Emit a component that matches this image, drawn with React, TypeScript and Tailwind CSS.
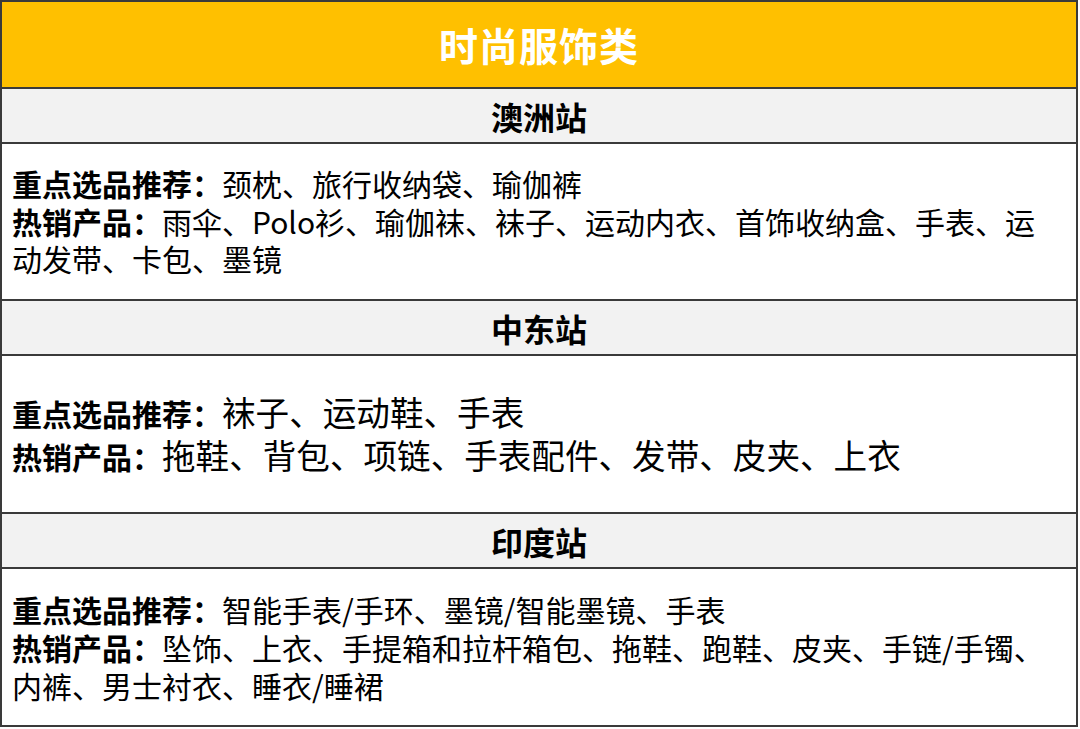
import React from "react";

const font = { fontFamily: '"Noto Sans CJK SC", "Noto Sans", sans-serif' };

function SubHeader({ title }: { title: string }) {
  return (
    <div className="h-[55px] border-b-2 border-[#3a3a3a] bg-[#f2f2f2] flex items-center justify-center">
      <span className="text-[32px] font-bold text-black leading-none">{title}</span>
    </div>
  );
}

function Line({ label, children, cls }: { label?: string; children: React.ReactNode; cls: string }) {
  return (
    <div className={"whitespace-nowrap " + cls}>
      {label && <span className="text-[30px] font-bold">{label}</span>}
      <span>{children}</span>
    </div>
  );
}

export default function App() {
  const r1 = "text-[30px] leading-[37.5px]";
  const r2 = "text-[33.6px] leading-[42px]";
  const r3 = "text-[30px] leading-[38px]";
  return (
    <div className="w-[1080px] h-[729px] bg-white" style={font}>
      <div className="w-[1078px] h-[727px] border-2 border-[#3a3a3a] flex flex-col text-black">
        <div className="h-[87px] border-b-2 border-[#3a3a3a] bg-[#ffc000] flex items-center justify-center">
          <span className="text-[39px] font-bold text-white leading-none tracking-[1px]">时尚服饰类</span>
        </div>

        <SubHeader title="澳洲站" />
        <div className="h-[157px] border-b-2 border-[#3a3a3a] flex flex-col justify-center pl-[10px]">
          <Line cls={r1} label="重点选品推荐：">颈枕、旅行收纳袋、瑜伽裤</Line>
          <Line cls={r1} label="热销产品：">雨伞、Polo衫、瑜伽袜、袜子、运动内衣、首饰收纳盒、手表、运</Line>
          <Line cls={r1}>动发带、卡包、墨镜</Line>
        </div>

        <SubHeader title="中东站" />
        <div className="h-[158px] border-b-2 border-[#3a3a3a] flex flex-col justify-center pl-[10px]">
          <Line cls={r2} label="重点选品推荐：">袜子、运动鞋、手表</Line>
          <Line cls={r2} label="热销产品：">拖鞋、背包、项链、手表配件、发带、皮夹、上衣</Line>
        </div>

        <SubHeader title="印度站" />
        <div className="flex-1 flex flex-col justify-center pl-[10px]">
          <Line cls={r3} label="重点选品推荐：">智能手表/手环、墨镜/智能墨镜、手表</Line>
          <Line cls={r3} label="热销产品：">坠饰、上衣、手提箱和拉杆箱包、拖鞋、跑鞋、皮夹、手链/手镯、</Line>
          <Line cls={r3}>内裤、男士衬衣、睡衣/睡裙</Line>
        </div>
      </div>
    </div>
  );
}
